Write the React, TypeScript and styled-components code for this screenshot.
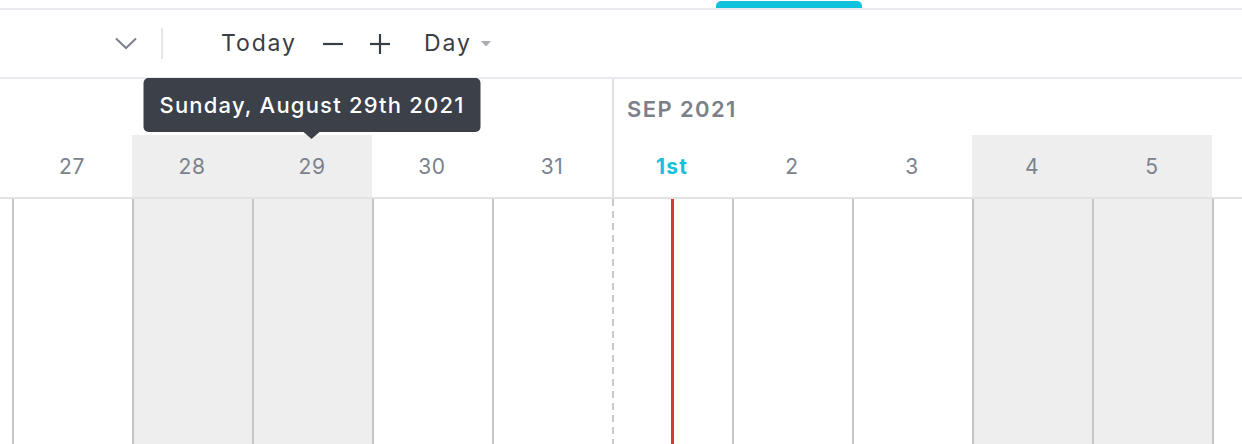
import React from 'react';
import styled, { createGlobalStyle } from 'styled-components';

const Global = createGlobalStyle`
  html, body { margin: 0; padding: 0; background: #ffffff; }
  body { font-family: Inter, "Noto Sans", sans-serif; overflow: hidden; }
  * { box-sizing: border-box; }
`;

const Page = styled.div`
  width: 1242px;
  height: 444px;
  display: flex;
  flex-direction: column;
  overflow: hidden;
  background: #ffffff;
`;

const TabStrip = styled.div`
  height: 10px;
  flex: none;
  border-bottom: 2px solid #e9e9ef;
  display: flex;
  align-items: flex-end;
  padding-left: 716px;
`;

const ActiveTab = styled.div`
  width: 146px;
  height: 7px;
  background: #12c2dc;
  border-radius: 5px 5px 0 0;
`;

const Toolbar = styled.div`
  height: 69px;
  flex: none;
  border-bottom: 2px solid #e9e9ef;
  display: flex;
  align-items: center;
  padding-left: 115px;
  color: #3a3e45;
  font-size: 23px;
  letter-spacing: 1.9px;
`;

const IconButton = styled.div<{ $ml?: number }>`
  display: flex;
  align-items: center;
  justify-content: center;
  margin-left: ${(p) => p.$ml ?? 0}px;
  line-height: 1;
`;

const Separator = styled.div`
  width: 2px;
  height: 31px;
  background: #e6e6eb;
  margin-left: 24px;
`;

const TextButton = styled.div<{ $ml: number }>`
  margin-left: ${(p) => p.$ml}px;
  line-height: 1;
  display: flex;
  align-items: center;
`;

const Header = styled.div`
  height: 120px;
  flex: none;
  border-bottom: 2px solid #e2e2e2;
  display: flex;
  margin-left: -108px;
`;

const MonthSegment = styled.div<{ $divider?: boolean }>`
  display: flex;
  flex-direction: column;
  box-shadow: ${(p) => (p.$divider ? 'inset 2px 0 0 #e0e0e2' : 'none')};
`;

const MonthLabel = styled.div`
  height: 56px;
  display: flex;
  align-items: center;
  padding-left: 15px;
  padding-top: 4px;
  font-size: 22px;
  font-weight: 600;
  color: #7b8089;
  letter-spacing: 1.4px;
`;

const DayRow = styled.div`
  display: flex;
  height: 62px;
`;

const DayCell = styled.div<{ $weekend?: boolean; $today?: boolean }>`
  position: relative;
  width: 120px;
  height: 62px;
  display: flex;
  align-items: center;
  justify-content: center;
  background: ${(p) => (p.$weekend ? '#eeeeee' : 'transparent')};
  color: ${(p) => (p.$today ? '#16c1dc' : '#7c828c')};
  font-size: 21px;
  font-weight: ${(p) => (p.$today ? 700 : 400)};
  letter-spacing: ${(p) => (p.$today ? '1.2px' : '0.6px')};
  padding-top: 1px;
`;

const Tooltip = styled.div`
  position: absolute;
  left: 50%;
  bottom: calc(100% + 3px);
  transform: translateX(-50%);
  height: 54px;
  padding: 0 16px;
  display: flex;
  align-items: center;
  background: #3b4049;
  border-radius: 5px;
  color: #ffffff;
  font-size: 22px;
  font-weight: 500;
  letter-spacing: 1.2px;
  white-space: nowrap;
  z-index: 5;

  &::after {
    content: '';
    position: absolute;
    left: 50%;
    top: 100%;
    transform: translateX(-50%);
    border-left: 8px solid transparent;
    border-right: 8px solid transparent;
    border-top: 7px solid #3b4049;
  }
`;

const Body = styled.div`
  flex: 1;
  display: flex;
  margin-left: -108px;
`;

const DayColumn = styled.div<{ $weekend?: boolean; $monthStart?: boolean }>`
  position: relative;
  width: 120px;
  flex: none;
  background-color: ${(p) => (p.$weekend ? '#eeeeee' : '#ffffff')};
  border-left: 2px solid ${(p) => (p.$monthStart ? 'transparent' : '#c5c5c5')};

  &::before {
    content: ${(p) => (p.$monthStart ? "''" : 'none')};
    position: absolute;
    top: 0;
    bottom: 0;
    left: -2px;
    width: 2px;
    background: repeating-linear-gradient(to bottom, #cacaca 0 7px, transparent 7px 12px);
  }
`;

const NowLine = styled.div`
  position: absolute;
  top: 0;
  bottom: 0;
  left: 57px;
  width: 3px;
  background: #d83b2d;
`;

type Day = { n: number; label: string; weekend?: boolean; today?: boolean; tip?: string };

// 26 Aug and 6 Sep are scrolled partly out of view; their labels are not visible.
const aug: Day[] = [
  { n: 26, label: '' },
  { n: 27, label: '27' },
  { n: 28, label: '28', weekend: true },
  { n: 29, label: '29', weekend: true, tip: 'Sunday, August 29th 2021' },
  { n: 30, label: '30' },
  { n: 31, label: '31' },
];

const sep: Day[] = [
  { n: 1, label: '1st', today: true },
  { n: 2, label: '2' },
  { n: 3, label: '3' },
  { n: 4, label: '4', weekend: true },
  { n: 5, label: '5', weekend: true },
  { n: 6, label: '' },
];

const Chevron = () => (
  <svg width="22" height="13" viewBox="0 0 22 13">
    <polyline points="1,1.5 11,11 21,1.5" fill="none" stroke="#7c828c" strokeWidth="2" />
  </svg>
);

const Minus = () => (
  <svg width="20" height="20" viewBox="0 0 20 20">
    <line x1="0" y1="10" x2="20" y2="10" stroke="#3a3e45" strokeWidth="2.2" />
  </svg>
);

const Plus = () => (
  <svg width="20" height="20" viewBox="0 0 20 20">
    <line x1="0" y1="10" x2="20" y2="10" stroke="#3a3e45" strokeWidth="2.2" />
    <line x1="10" y1="0" x2="10" y2="20" stroke="#3a3e45" strokeWidth="2.2" />
  </svg>
);

const Caret = () => (
  <svg width="10" height="6" viewBox="0 0 10 6">
    <polygon points="0,0 10,0 5,5.5" fill="#a8adb5" />
  </svg>
);

export default function App() {
  return (
    <Page>
      <Global />
      <TabStrip>
        <ActiveTab />
      </TabStrip>
      <Toolbar>
        <IconButton>
          <Chevron />
        </IconButton>
        <Separator />
        <TextButton $ml={58}>Today</TextButton>
        <IconButton $ml={26}>
          <Minus />
        </IconButton>
        <IconButton $ml={27}>
          <Plus />
        </IconButton>
        <TextButton $ml={34}>Day</TextButton>
        <IconButton $ml={9}>
          <Caret />
        </IconButton>
      </Toolbar>
      <Header>
        <MonthSegment>
          <MonthLabel />
          <DayRow>
            {aug.map((d) => (
              <DayCell key={d.n} $weekend={d.weekend}>
                {d.label}
                {d.tip && <Tooltip>{d.tip}</Tooltip>}
              </DayCell>
            ))}
          </DayRow>
        </MonthSegment>
        <MonthSegment $divider>
          <MonthLabel>SEP 2021</MonthLabel>
          <DayRow>
            {sep.map((d) => (
              <DayCell key={d.n} $weekend={d.weekend} $today={d.today}>
                {d.label}
              </DayCell>
            ))}
          </DayRow>
        </MonthSegment>
      </Header>
      <Body>
        {aug.map((d) => (
          <DayColumn key={`a${d.n}`} $weekend={d.weekend} />
        ))}
        {sep.map((d) => (
          <DayColumn key={`s${d.n}`} $weekend={d.weekend} $monthStart={d.n === 1}>
            {d.today && <NowLine />}
          </DayColumn>
        ))}
      </Body>
    </Page>
  );
}
